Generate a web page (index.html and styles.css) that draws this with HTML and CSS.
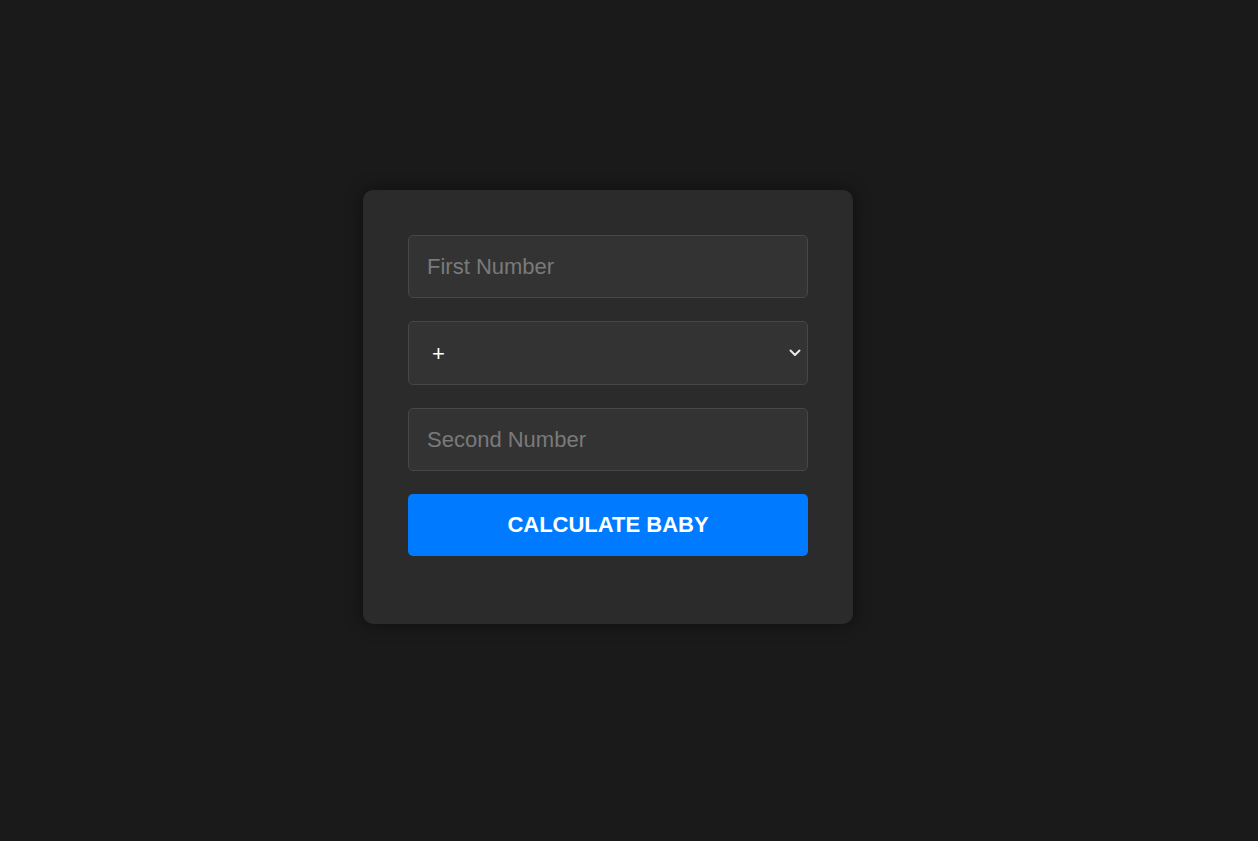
FILE: index.html
```html
<!DOCTYPE html>
<html lang="en">
<head>
<meta charset="utf-8">
<title>Calculator</title>
<link rel="stylesheet" href="styles.css">
</head>
<body>
<main class="page">
  <form class="card" onsubmit="return false;">
    <input class="field" type="text" placeholder="First Number">
    <div class="select-wrap">
      <select class="field select">
        <option>+</option>
        <option>-</option>
        <option>*</option>
        <option>/</option>
      </select>
      <svg class="chevron" width="12" height="8" viewBox="0 0 12 8" aria-hidden="true"><path d="M1.5 1.5 L6 6 L10.5 1.5" fill="none" stroke="#e8e8e8" stroke-width="2" stroke-linecap="round" stroke-linejoin="round"/></svg>
    </div>
    <input class="field" type="text" placeholder="Second Number">
    <button class="btn" type="submit">CALCULATE BABY</button>
  </form>
</main>
</body>
</html>
```
FILE: styles.css
```css
* { box-sizing: border-box; }
html, body {
  margin: 0;
  padding: 0;
  background: #1a1a1a;
  font-family: "Liberation Sans", Arial, sans-serif;
}
.page {
  height: 841px;
  display: flex;
  justify-content: center;
  align-items: flex-start;
  padding-top: 190px;
}
.card {
  width: 490px;
  background: #2b2b2b;
  border-radius: 10px;
  padding: 45px;
  box-shadow: 0 0 18px rgba(0, 0, 0, 0.45);
  display: flex;
  flex-direction: column;
  margin-right: 42px;
}
.field {
  display: block;
  width: 400px;
  height: 63px;
  margin: 0 0 23px;
  padding: 0 18px;
  font-family: "Liberation Sans", Arial, sans-serif;
  font-size: 22px;
  color: #ffffff;
  background: #333333;
  border: 1px solid #474747;
  border-radius: 5px;
  outline: none;
}
.field::placeholder { color: #7a7a7a; }
.select-wrap {
  position: relative;
  width: 400px;
}
.select {
  appearance: none;
  -webkit-appearance: none;
  height: 64px;
  padding-left: 23px;
  font-size: 22px;
  cursor: pointer;
}
.chevron {
  position: absolute;
  right: 7px;
  top: 28px;
  pointer-events: none;
}
.btn {
  width: 400px;
  height: 62px;
  margin: 0 0 23px;
  border: none;
  border-radius: 5px;
  background: #007bff;
  color: #ffffff;
  font-family: "Liberation Sans", Arial, sans-serif;
  font-size: 22px;
  font-weight: bold;
  cursor: pointer;
}
```
